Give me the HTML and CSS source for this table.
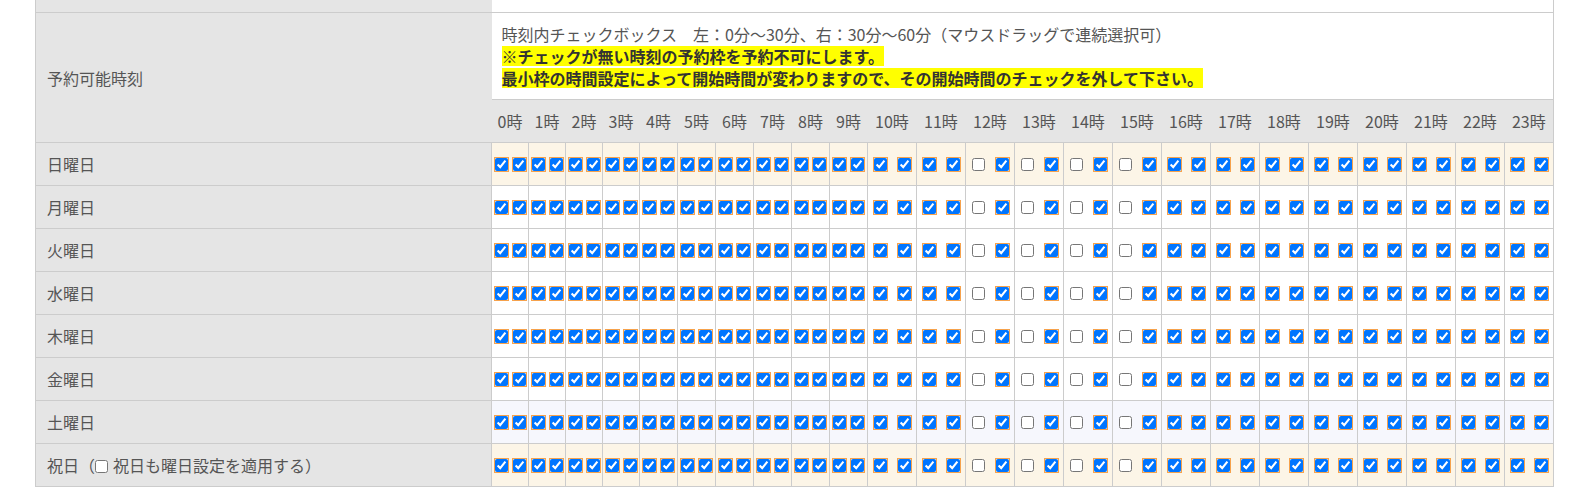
FILE: index.html
```html
<!DOCTYPE html>
<html lang="ja">

<head>
    <meta charset="UTF-8">
    <meta name="viewport" content="width=device-width, initial-scale=1.0">
    <title>予約可能時刻</title>
    <link rel="stylesheet" href="styles.css">
</head>

<body>
    <div class="wrap">
        <table class="setting" id="settingTable">
            <colgroup>
                <col class="c-label">
                <col class="c-sm"><col class="c-sm"><col class="c-sm"><col class="c-sm">
                <col class="c-md"><col class="c-md"><col class="c-md"><col class="c-md"><col class="c-md"><col class="c-md">
                <col class="c-lg"><col class="c-lg"><col class="c-lg"><col class="c-lg"><col class="c-lg"><col class="c-lg"><col class="c-lg">
                <col class="c-lg"><col class="c-lg"><col class="c-lg"><col class="c-lg"><col class="c-lg"><col class="c-lg"><col class="c-lg">
            </colgroup>
            <tbody id="settingBody">
                <tr class="prev">
                    <th></th>
                    <td colspan="24"></td>
                </tr>
                <tr>
                    <th rowspan="2" class="label">予約可能時刻</th>
                    <td colspan="24" class="note">
                        <div class="line">時刻内チェックボックス　左：0分〜30分、右：30分〜60分（マウスドラッグで連続選択可）</div>
                        <div class="line"><span class="mark">※チェックが無い時刻の予約枠を予約不可にします。</span></div>
                        <div class="line"><span class="mark">最小枠の時間設定によって開始時間が変わりますので、その開始時間のチェックを外して下さい。</span></div>
                    </td>
                </tr>
                <tr class="hours" id="hoursRow"></tr>
            </tbody>
        </table>
    </div>

    <script>
        const days = [
            { label: "日曜日", cls: "sun" },
            { label: "月曜日", cls: "" },
            { label: "火曜日", cls: "" },
            { label: "水曜日", cls: "" },
            { label: "木曜日", cls: "" },
            { label: "金曜日", cls: "" },
            { label: "土曜日", cls: "sat" },
            { label: '祝日（<input type="checkbox" class="holiday-check">祝日も曜日設定を適用する）', cls: "holiday" },
        ];

        // 左側（0分〜30分）がオフの時間
        const offHours = [12, 13, 14, 15];

        const hoursRow = document.getElementById("hoursRow");
        for (let h = 0; h < 24; h++) {
            const th = document.createElement("th");
            th.innerText = `${h}時`;
            hoursRow.appendChild(th);
        }

        const body = document.getElementById("settingBody");
        days.forEach(day => {
            const tr = document.createElement("tr");
            tr.className = "day " + day.cls;
            let html = `<th class="day-label">${day.label}</th>`;
            for (let h = 0; h < 24; h++) {
                const left = offHours.includes(h) ? "" : " checked";
                html += `<td class="check"><div class="pair"><input type="checkbox"${left}><input type="checkbox" checked></div></td>`;
            }
            tr.innerHTML = html;
            body.appendChild(tr);
        });
    </script>
</body>

</html>
```

FILE: styles.css
```css
body {
    font-family: "Noto Sans CJK JP", "Noto Sans", sans-serif;
    font-size: 16px;
    margin: 0;
    padding: 0;
    background-color: #fff;
    color: #555;
}

.wrap {
    padding-left: 35px;
}

.setting {
    border-collapse: collapse;
    table-layout: fixed;
    width: 1519px;
}

.c-label {
    width: 456px;
}

.c-sm {
    width: 37px;
}

.c-md {
    width: 38px;
}

.c-lg {
    width: 49px;
}

.setting th {
    font-weight: normal;
    background-color: #e5e5e5;
    padding: 0;
}

.prev th,
.prev td {
    height: 12px;
    padding: 0;
}

.prev th {
    border-left: 1px solid #ccc;
    border-bottom: 1px solid #ccc;
}

.prev td {
    background-color: #fff;
    border-right: 1px solid #ccc;
    border-bottom: 1px solid #ccc;
}

.label {
    text-align: left;
    padding-left: 11px !important;
    border-left: 1px solid #ccc;
    border-bottom: 1px solid #ccc;
    line-height: 22px;
}

.note {
    background-color: #fff;
    height: 66px;
    padding: 10px 10px 10px 10px;
    border-right: 1px solid #ccc;
    border-bottom: 1px solid #ccc;
    vertical-align: middle;
}

.line {
    line-height: 22px;
    height: 22px;
    white-space: nowrap;
}

.mark {
    display: inline-block;
    background-color: #ffff00;
    color: #333;
    font-weight: bold;
    line-height: 20px;
    vertical-align: top;
    margin-top: 1px;
}

.hours th {
    height: 42px;
    text-align: center;
    white-space: nowrap;
    border-bottom: 1px solid #ccc;
}

.hours th:last-child {
    border-right: 1px solid #ccc;
}

.day-label {
    height: 42px;
    text-align: left;
    padding-left: 11px !important;
    border: 1px solid #ccc;
    white-space: nowrap;
}

.check {
    border: 1px solid #ccc;
    padding: 0;
    background-color: #fff;
}

.sun .check,
.holiday .check {
    background-color: #fcf5e7;
}

.sat .check {
    background-color: #f6f7fd;
}

.pair {
    display: flex;
    justify-content: space-around;
    align-items: center;
}

.pair input {
    width: 13px;
    height: 13px;
    margin: 0;
}

.pair input:checked {
    outline: 1px solid #f6a24c;
}

.holiday-check {
    width: 13px;
    height: 13px;
    margin: 0 5px 0 0;
    vertical-align: -1px;
}
```
